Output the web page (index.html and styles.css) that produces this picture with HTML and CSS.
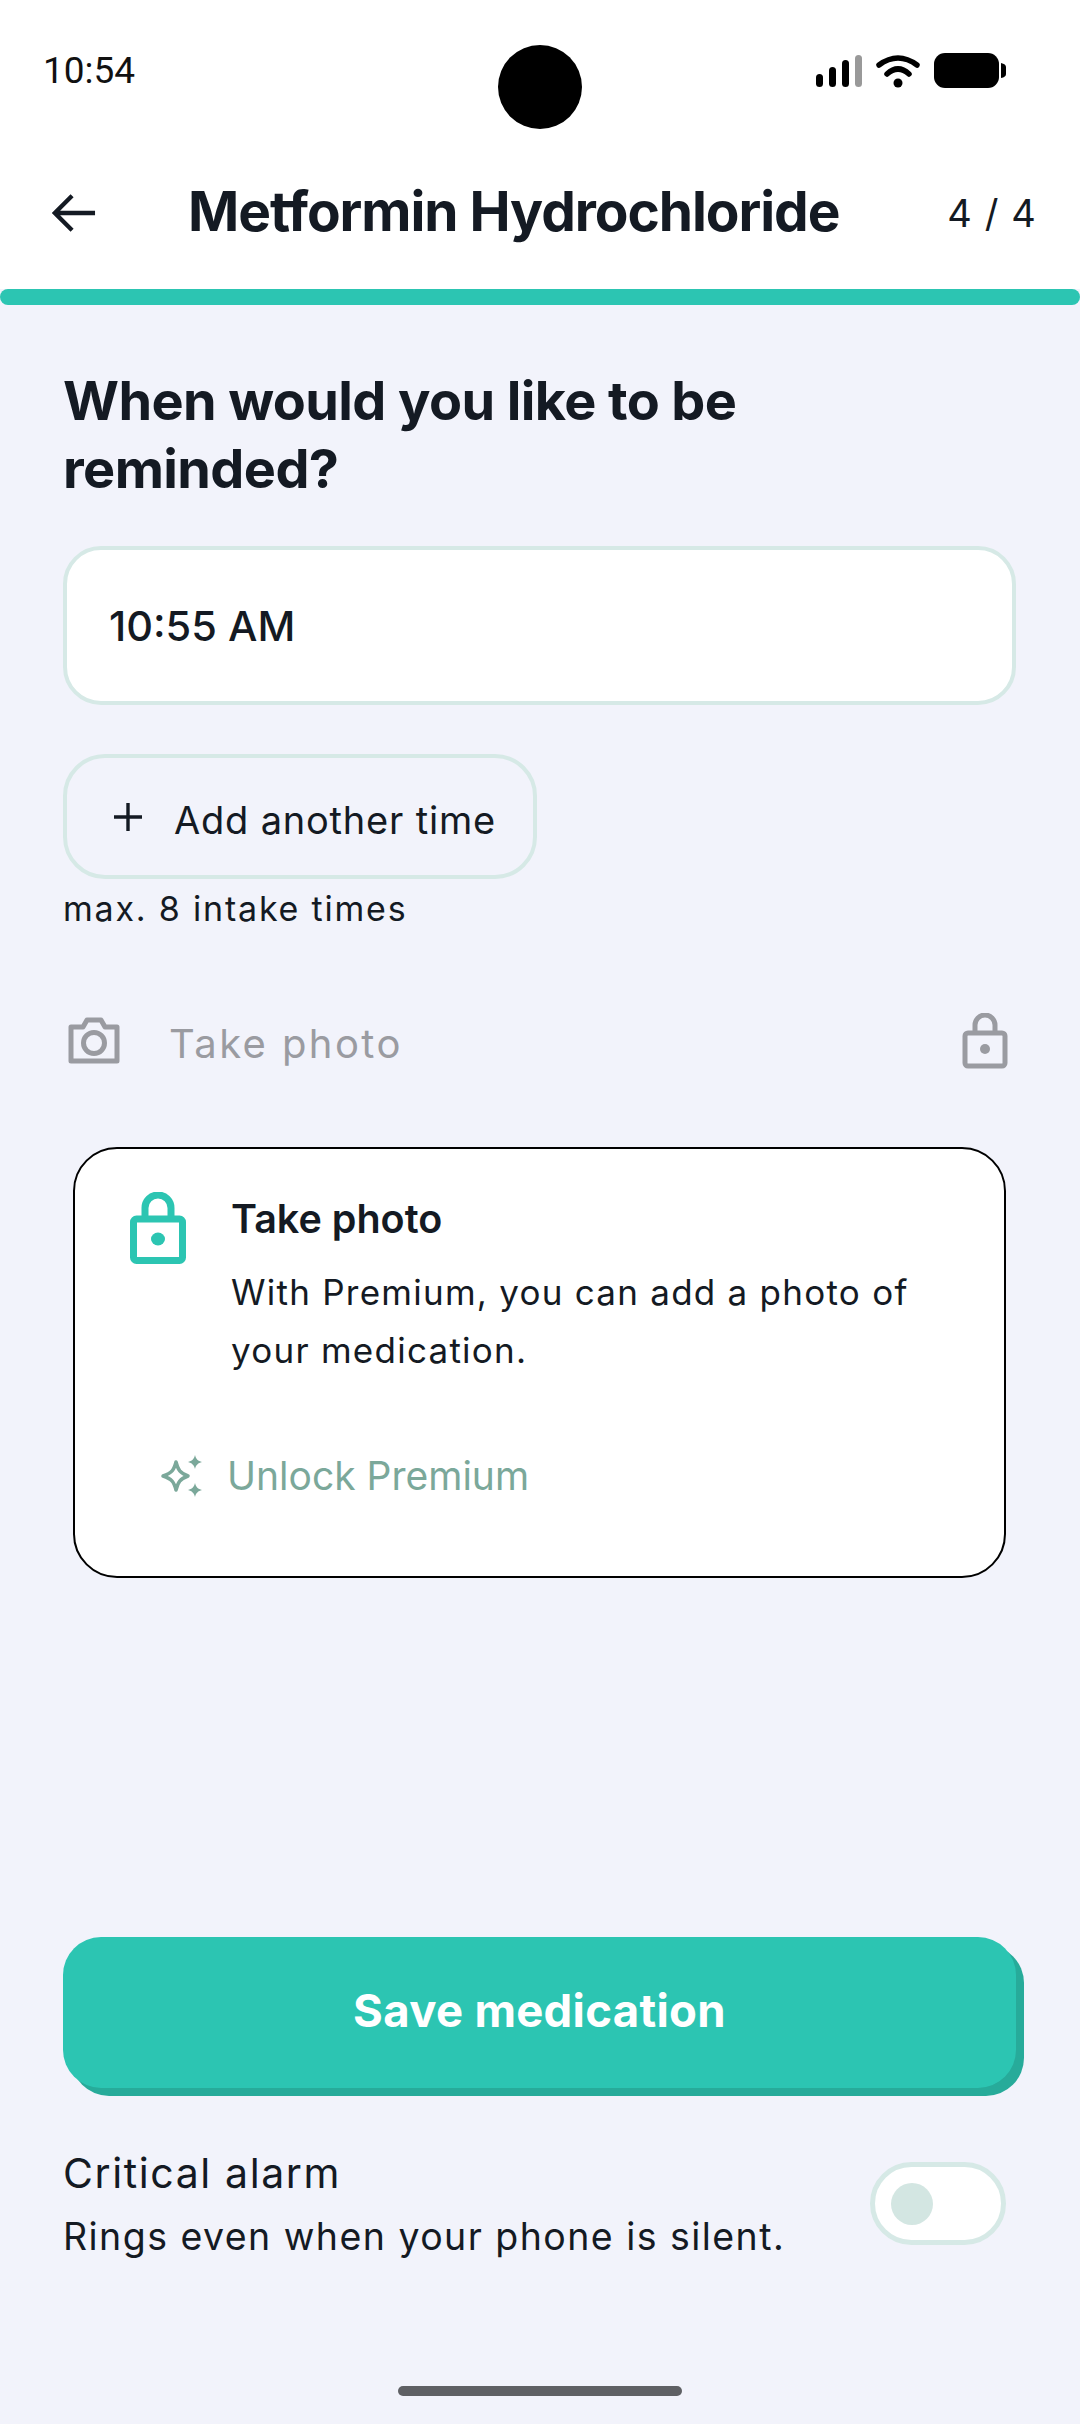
FILE: index.html
```html
<!DOCTYPE html>
<html lang="en">
  <head>
    <meta charset="UTF-8" />
    <meta name="viewport" content="width=device-width, initial-scale=1.0" />
    <title>Metformin Hydrochloride</title>
    <link rel="stylesheet" href="styles.css">
  </head>
  <body>
    <div class="top">
      <div class="status-bar">
        <span class="clock">10:54</span>
        <span class="camera-hole"></span>
        <div class="status-icons">
          <svg width="46" height="34" viewBox="0 0 46 34">
            <rect x="0" y="20" width="7" height="13" rx="3.5" fill="#000" />
            <rect x="13" y="13" width="7" height="20" rx="3.5" fill="#000" />
            <rect x="26" y="6" width="7" height="27" rx="3.5" fill="#000" />
            <rect x="39" y="1" width="7" height="32" rx="3.5" fill="#999" />
          </svg>
          <svg width="44" height="34" viewBox="0 0 44 34">
            <path d="M3 11 Q22 -3 41 11" fill="none" stroke="#000" stroke-width="5.5" stroke-linecap="round" />
            <path d="M11 20 Q22 10 33 20" fill="none" stroke="#000" stroke-width="5.5" stroke-linecap="round" />
            <circle cx="22" cy="29" r="4.5" fill="#000" />
          </svg>
          <svg width="72" height="36" viewBox="0 0 72 36">
            <rect x="0" y="0" width="65" height="35" rx="11" fill="#000" />
            <path d="M67 10 Q72 11 72 14 V21 Q72 24 67 25 Z" fill="#000" />
          </svg>
        </div>
      </div>
      <div class="header">
        <svg class="back" width="44" height="40" viewBox="0 0 46 40">
          <path d="M45 20 H4 M21 2 L3 20 L21 38" fill="none" stroke="#141a23" stroke-width="4.5" />
        </svg>
        <h1 class="title">Metformin Hydrochloride</h1>
        <span class="steps">4 / 4</span>
      </div>
    </div>
    <div class="progress"></div>

    <main class="content">
      <h2 class="question">When would you like to be<br />reminded?</h2>
      <div class="time-field">10:55 AM</div>
      <div class="add-time">
        <svg width="30" height="30" viewBox="0 0 30 30">
          <path d="M15 1 V29 M1 15 H29" stroke="#141a23" stroke-width="3.4" />
        </svg>
        <span>Add another time</span>
      </div>
      <p class="hint">max. 8 intake times</p>

      <div class="photo-row">
        <svg width="52" height="47" viewBox="0 0 52 47">
          <path d="M3 10 H15 L19 3 H33 L37 10 H49 V44 H3 Z" fill="none" stroke="#9a9ba1" stroke-width="5" stroke-linejoin="round" />
          <circle cx="26" cy="26" r="10.500" fill="none" stroke="#9a9ba1" stroke-width="5" />
        </svg>
        <span class="photo-label">Take photo</span>
        <svg class="photo-lock" width="46" height="56" viewBox="0 0 46 56">
          <path d="M13 20 V12 A10 10 0 0 1 33 12 V20" fill="none" stroke="#9a9ba1" stroke-width="5" />
          <rect x="3" y="20" width="40" height="33" rx="3" fill="none" stroke="#9a9ba1" stroke-width="5" />
          <circle cx="23" cy="36" r="5" fill="#9a9ba1" />
        </svg>
      </div>

      <section class="premium-card">
        <div class="premium-top">
          <svg class="premium-lock" width="56" height="72" viewBox="0 0 56 72">
            <path d="M15 26 V16 A13 13 0 0 1 41 16 V26" fill="none" stroke="#2cc5b2" stroke-width="7" />
            <rect x="3.500" y="27" width="49" height="41.500" rx="3" fill="none" stroke="#2cc5b2" stroke-width="7" />
            <ellipse cx="28" cy="47" rx="7" ry="6.500" fill="#2cc5b2" />
          </svg>
          <div>
            <h3 class="premium-title">Take photo</h3>
            <p class="premium-text">With Premium, you can add a photo of your medication.</p>
          </div>
        </div>
        <div class="unlock">
          <svg width="44" height="42" viewBox="0 0 44 42">
            <path d="M17 7 C19 15 21 18 29 21 C21 24 19 27 17 35 C15 27 13 24 4 21 C13 18 15 15 17 7 Z" fill="none" stroke="#7ba89a" stroke-width="3.5" stroke-linejoin="round" />
            <path d="M36 0 C37 4 39 6 43 7 C39 8 37 10 36 14 C35 10 33 8 29 7 C33 6 35 4 36 0 Z" fill="#7ba89a" />
            <path d="M36 28 C37 32 39 34 43 35 C39 36 37 38 36 42 C35 38 33 36 29 35 C33 34 35 32 36 28 Z" fill="#7ba89a" />
          </svg>
          <span>Unlock Premium</span>
        </div>
      </section>

      <button class="save" type="button">Save medication</button>

      <div class="alarm">
        <div>
          <div class="alarm-title">Critical alarm</div>
          <div class="alarm-text">Rings even when your phone is silent.</div>
        </div>
        <div class="toggle"><span class="knob"></span></div>
      </div>
    </main>

    <div class="home-bar"></div>
  </body>
</html>
```

FILE: styles.css
```css
* {
  box-sizing: border-box;
}
body {
  font-family: Inter, "Noto Sans", sans-serif;
  background-color: #f2f3fb;
  color: #141a23;
  margin: 0;
  width: 1080px;
  height: 2424px;
  display: flex;
  flex-direction: column;
  overflow: hidden;
}
h1,
h2,
h3,
p {
  margin: 0;
}
.top {
  background: #fff;
  height: 289px;
}
.status-bar {
  height: 174px;
  padding: 45px 74px 0 43px;
  display: flex;
  align-items: flex-start;
  position: relative;
}
.clock {
  font-family: Roboto, sans-serif;
  font-size: 37px;
  line-height: 52px;
  color: #111;
}
.camera-hole {
  position: absolute;
  left: 498px;
  top: 45px;
  width: 84px;
  height: 84px;
  border-radius: 50%;
  background: #000;
}
.status-icons {
  margin-left: auto;
  margin-top: -1px;
  display: flex;
  align-items: center;
  gap: 14px;
  height: 54px;
}
.header {
  display: flex;
  align-items: center;
  height: 76px;
  margin-top: -1px;
  padding: 0 43px 0 52px;
}
.back {
  flex: none;
  margin-top: 4px;
}
.title {
  font-size: 55px;
  font-weight: 700;
  letter-spacing: -1.05px;
  margin-left: 92px;
  white-space: nowrap;
}
.steps {
  font-size: 38px;
  letter-spacing: 1.1px;
  margin-left: auto;
  margin-top: 4px;
}
.progress {
  height: 16px;
  background: #2cc5b2;
  border-radius: 8px;
}
.content {
  flex: 1;
  padding: 62px 64px 0 63px;
  display: flex;
  flex-direction: column;
}
.question {
  font-size: 54px;
  font-weight: 700;
  line-height: 68px;
  letter-spacing: -0.6px;
}
.time-field {
  margin-top: 43px;
  height: 159px;
  width: 953px;
  background: #fff;
  border: 4px solid #d6e9e6;
  border-radius: 38px;
  padding-left: 42px;
  display: flex;
  align-items: center;
  font-size: 41.5px;
  font-weight: 500;
}
.add-time {
  margin-top: 49px;
  width: 474px;
  height: 125px;
  border: 4px solid #d6e9e6;
  border-radius: 42px;
  padding: 7px 0 0 46px;
  display: flex;
  align-items: center;
  gap: 31px;
  font-size: 38px;
  letter-spacing: 0.8px;
}
.add-time svg {
  margin-bottom: 7px;
}
.hint {
  margin-top: 9px;
  font-size: 34px;
  line-height: 42px;
  letter-spacing: 1.8px;
}
.photo-row {
  margin-top: 79px;
  height: 68px;
  padding: 0 8px 0 5px;
  display: flex;
  align-items: center;
}
.photo-row svg {
  margin-bottom: 5px;
}
.photo-label {
  margin-left: 49px;
  font-size: 40px;
  letter-spacing: 2.4px;
  color: #9a9ba1;
}
.photo-lock {
  margin-left: auto;
}
.premium-card {
  margin: 70px 10px 0 10px;
  height: 431px;
  background: #fff;
  border: 2.500px solid #000;
  border-radius: 44px;
  padding: 43px 50px 0 55px;
}
.premium-top {
  display: flex;
  align-items: flex-start;
  gap: 45px;
}
.premium-lock {
  flex: none;
}
.premium-title {
  font-size: 39.5px;
  font-weight: 600;
  line-height: 54px;
}
.premium-text {
  margin-top: 17px;
  font-size: 35px;
  line-height: 58px;
  letter-spacing: 1.25px;
}
.unlock {
  margin-top: 73px;
  margin-left: 29px;
  display: flex;
  align-items: center;
  gap: 24px;
  font-size: 39px;
  color: #7ba89a;
}
.save {
  margin-top: 359px;
  width: 953px;
  height: 151px;
  flex: none;
  border: none;
  border-radius: 38px;
  background: #2cc5b2;
  box-shadow: 8px 8px 0 #27ab9a;
  color: #fff;
  padding-bottom: 6px;
  font-family: Inter, sans-serif;
  font-size: 45.5px;
  font-weight: 700;
  letter-spacing: 0.3px;
}
.alarm {
  margin-top: 55px;
  padding-right: 10px;
  display: flex;
  align-items: center;
  justify-content: space-between;
}
.alarm-title {
  font-size: 41px;
  line-height: 60px;
  letter-spacing: 1.6px;
}
.alarm-text {
  font-size: 37.5px;
  line-height: 67px;
  letter-spacing: 1.45px;
}
.toggle {
  width: 136px;
  height: 83px;
  margin-bottom: 6px;
  background: #fff;
  border: 5px solid #d6e9e6;
  border-radius: 42px;
  padding-left: 16px;
  display: flex;
  align-items: center;
}
.knob {
  width: 42px;
  height: 42px;
  border-radius: 50%;
  background: #d3e6e2;
}
.home-bar {
  position: absolute;
  left: 398px;
  top: 2386px;
  width: 284px;
  height: 10px;
  border-radius: 5px;
  background: #5f6064;
}
```
